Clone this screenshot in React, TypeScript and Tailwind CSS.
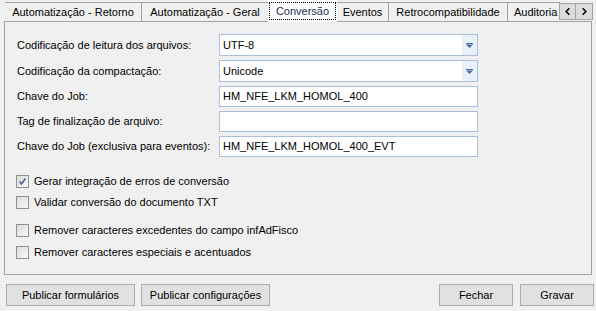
import React from 'react';
import { ChevronLeft, ChevronRight } from 'lucide-react';

const tabs = [
  { label: 'Automatização - Retorno', w: 'w-[138px]' },
  { label: 'Automatização - Geral', w: 'w-[128px]' },
  { label: 'Conversão', w: 'w-[69px]', active: true },
  { label: 'Eventos', w: 'w-[53px]' },
  { label: 'Retrocompatibilidade', w: 'w-[120px]' },
  { label: 'Auditoria', w: 'w-[62px]', left: true },
];

const Tab: React.FC<{ label: string; w: string; active?: boolean; left?: boolean }> = ({ label, w, active, left }) => {
  if (active) {
    return (
      <div className={`${w} h-[22px] -mb-px -ml-px flex-none relative z-10 bg-white flex items-center justify-center px-[1px]`}>
        <span className="w-full h-[18px] border border-dotted border-black flex items-center justify-center text-[#1e2b4f] leading-none">
          {label}
        </span>
      </div>
    );
  }
  return (
    <div
      className={`${w} h-[19px] -ml-px flex-none border border-b-0 border-[#a3a3a3] bg-[#f0f0f0] flex items-center whitespace-nowrap leading-none ${
        left ? 'justify-start pl-[6px]' : 'justify-center'
      }`}
    >
      {label}
    </div>
  );
};

const Combo: React.FC<{ value: string }> = ({ value }) => (
  <div className="w-[259px] h-[22px] border border-[#abbfdd] bg-white flex">
    <div className="flex-1 flex items-center pl-[3px]">{value}</div>
    <div className="w-[15px] bg-[#e8f0fb] flex items-center justify-center">
      <svg width="7" height="5" viewBox="0 0 7 5">
        <rect x="0" y="0" width="7" height="1" fill="#4a6aa0" />
        <polygon points="0,1.5 7,1.5 3.5,5" fill="#4a6aa0" />
      </svg>
    </div>
  </div>
);

const Input: React.FC<{ value: string }> = ({ value }) => (
  <div className="w-[259px] h-[21px] border border-[#abbfdd] bg-white flex items-center pl-[3px]">{value}</div>
);

const Row: React.FC<{ label: string; mt: string; children: React.ReactNode }> = ({ label, mt, children }) => (
  <div className={`flex items-center ${mt}`}>
    <div className="w-[202px] flex-none">{label}</div>
    {children}
  </div>
);

const Check: React.FC<{ label: string; checked?: boolean; mt: string }> = ({ label, checked, mt }) => (
  <div className={`flex items-center h-[13px] ${mt}`}>
    <div className="w-[13px] h-[13px] border border-[#8e8f8f] bg-gradient-to-br from-[#dcdcdc] to-[#f8f8f8] flex items-center justify-center flex-none">
      {checked && (
        <svg width="9" height="9" viewBox="0 0 9 9">
          <path d="M1.5 4.5 L3.5 7 L7.5 1.5" stroke="#4d6199" strokeWidth="1.6" fill="none" />
        </svg>
      )}
    </div>
    <span className="ml-[5px]">{label}</span>
  </div>
);

const Button: React.FC<{ label: string; w: string }> = ({ label, w }) => (
  <div className={`${w} h-[22px] border border-[#adadad] bg-[#e1e1e1] flex items-center justify-center`}>{label}</div>
);

export default function App() {
  return (
    <div
      className="w-[596px] h-[311px] bg-[#f0f0f0] text-black text-[11px] overflow-hidden"
      style={{ fontFamily: '"Liberation Sans", Arial, sans-serif' }}
    >
      {/* tab strip */}
      <div className="h-[21px] flex items-end pl-[5px]">
        <div className="w-[555px] flex items-end overflow-x-clip">
          {tabs.map((t) => (
            <Tab key={t.label} {...t} />
          ))}
        </div>
        <div className="flex self-start mt-[3px] -ml-px">
          <div className="w-[17px] h-[17px] border border-[#a3a3a3] bg-[#dcdcdc] flex items-center justify-center">
            <ChevronLeft size={11} strokeWidth={3.5} />
          </div>
          <div className="w-[17px] h-[17px] border border-l-0 border-[#a3a3a3] bg-[#dcdcdc] flex items-center justify-center">
            <ChevronRight size={11} strokeWidth={3.5} />
          </div>
        </div>
      </div>

      {/* page */}
      <div className="ml-[4px] w-[588px] h-[254px] border border-[#a3a3a3] bg-[#f0f0f0] pl-[12px] pt-[12px]">
        <Row label="Codificação de leitura dos arquivos:" mt="mt-0">
          <Combo value="UTF-8" />
        </Row>
        <Row label="Codificação da compactação:" mt="mt-[4px]">
          <Combo value="Unicode" />
        </Row>
        <Row label="Chave do Job:" mt="mt-[4px]">
          <Input value="HM_NFE_LKM_HOMOL_400" />
        </Row>
        <Row label="Tag de finalização de arquivo:" mt="mt-[4px]">
          <Input value="" />
        </Row>
        <Row label="Chave do Job (exclusiva para eventos):" mt="mt-[4px]">
          <Input value="HM_NFE_LKM_HOMOL_400_EVT" />
        </Row>

        <div className="-ml-px">
          <Check label="Gerar integração de erros de conversão" checked mt="mt-[18px]" />
          <Check label="Validar conversão do documento TXT" mt="mt-[8px]" />
          <Check label="Remover caracteres excedentes do campo infAdFisco" mt="mt-[15px]" />
          <Check label="Remover caracteres especiais e acentuados" mt="mt-[9px]" />
        </div>
      </div>

      {/* buttons */}
      <div className="flex mt-[9px] pl-[6px] pr-[2px]">
        <Button label="Publicar formulários" w="w-[129px]" />
        <div className="ml-[6px]">
          <Button label="Publicar configurações" w="w-[129px]" />
        </div>
        <div className="flex-1" />
        <Button label="Fechar" w="w-[74px]" />
        <div className="ml-[7px]">
          <Button label="Gravar" w="w-[74px]" />
        </div>
      </div>
    </div>
  );
}
